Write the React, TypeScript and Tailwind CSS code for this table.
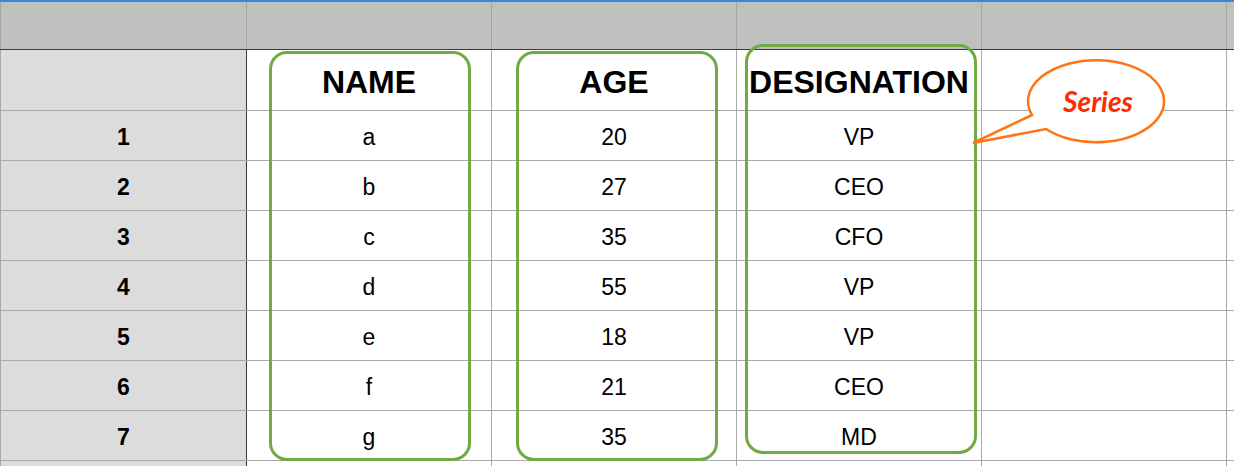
import React from "react";

const rows = [
  { n: "1", name: "a", age: "20", des: "VP" },
  { n: "2", name: "b", age: "27", des: "CEO" },
  { n: "3", name: "c", age: "35", des: "CFO" },
  { n: "4", name: "d", age: "55", des: "VP" },
  { n: "5", name: "e", age: "18", des: "VP" },
  { n: "6", name: "f", age: "21", des: "CEO" },
  { n: "7", name: "g", age: "35", des: "MD" },
];

function Cell({ children, bold }: { children?: React.ReactNode; bold?: boolean }) {
  return (
    <div
      className={`w-[245px] shrink-0 border-r border-[#a9a9a9] flex items-center justify-center pt-[3px] ${
        bold ? "font-bold text-[32px]" : "text-[23px]"
      }`}
    >
      {children}
    </div>
  );
}

export default function App() {
  return (
    <div
      className="relative w-[1234px] h-[466px] overflow-hidden bg-white text-black"
      style={{ fontFamily: '"Liberation Sans", Arial, sans-serif' }}
    >
      {/* column header strip */}
      <div className="flex h-[50px] border-t-2 border-[#3b86d8] bg-[#bfc1bf] border-b border-b-[#3a3a3a]">
        <div className="w-[247px] shrink-0 border-l border-r border-[#a5a7a5]" />
        <div className="w-[245px] shrink-0 border-r border-[#a5a7a5]" />
        <div className="w-[245px] shrink-0 border-r border-[#a5a7a5]" />
        <div className="w-[245px] shrink-0 border-r border-[#a5a7a5]" />
        <div className="w-[245px] shrink-0 border-r border-[#a5a7a5]" />
        <div className="flex-1" />
      </div>

      {/* title row */}
      <div className="flex h-[61px] border-b border-[#a9a9a9]">
        <div className="w-[247px] shrink-0 bg-[#dcdcdc] border-l border-l-[#a9a9a9] border-r border-r-[#3a3a3a]" />
        <Cell bold>NAME</Cell>
        <Cell bold>AGE</Cell>
        <Cell bold>DESIGNATION</Cell>
        <Cell />
        <div className="flex-1" />
      </div>

      {rows.map((r) => (
        <div key={r.n} className="flex h-[50px] border-b border-[#a9a9a9]">
          <div className="w-[247px] shrink-0 bg-[#dcdcdc] border-l border-l-[#a9a9a9] border-r border-r-[#3a3a3a] flex items-center justify-center pt-[3px] font-bold text-[23px]">
            {r.n}
          </div>
          <Cell>{r.name}</Cell>
          <Cell>{r.age}</Cell>
          <Cell>{r.des}</Cell>
          <Cell />
          <div className="flex-1" />
        </div>
      ))}

      <div className="flex h-[10px]">
        <div className="w-[247px] shrink-0 bg-[#dcdcdc] border-l border-l-[#a9a9a9] border-r border-r-[#3a3a3a]" />
        <Cell />
        <Cell />
        <Cell />
        <Cell />
      </div>

      {/* series highlight boxes */}
      <div className="absolute left-[269px] top-[51px] w-[202px] h-[410px] border-[3px] border-[#70aa45] rounded-[18px] pointer-events-none" />
      <div className="absolute left-[516px] top-[51px] w-[202px] h-[410px] border-[3px] border-[#70aa45] rounded-[18px] pointer-events-none" />
      <div className="absolute left-[745px] top-[44px] w-[232px] h-[410px] border-[3px] border-[#70aa45] rounded-[18px] pointer-events-none" />

      {/* callout */}
      <svg className="absolute inset-0 pointer-events-none" width="1234" height="466">
        <path
          d="M 1032 115 L 973 143 L 1046 129 A 68 41 0 1 0 1032 115 Z"
          fill="white"
          stroke="#ff7414"
          strokeWidth="2.5"
          strokeLinejoin="miter"
        />
        <text
          x="1098"
          y="112"
          textAnchor="middle"
          fill="#ff2a00"
          fontSize="28"
          fontStyle="italic"
          fontWeight="bold"
          fontFamily="Lato, 'Open Sans', sans-serif"
        >
          Series
        </text>
      </svg>
    </div>
  );
}
